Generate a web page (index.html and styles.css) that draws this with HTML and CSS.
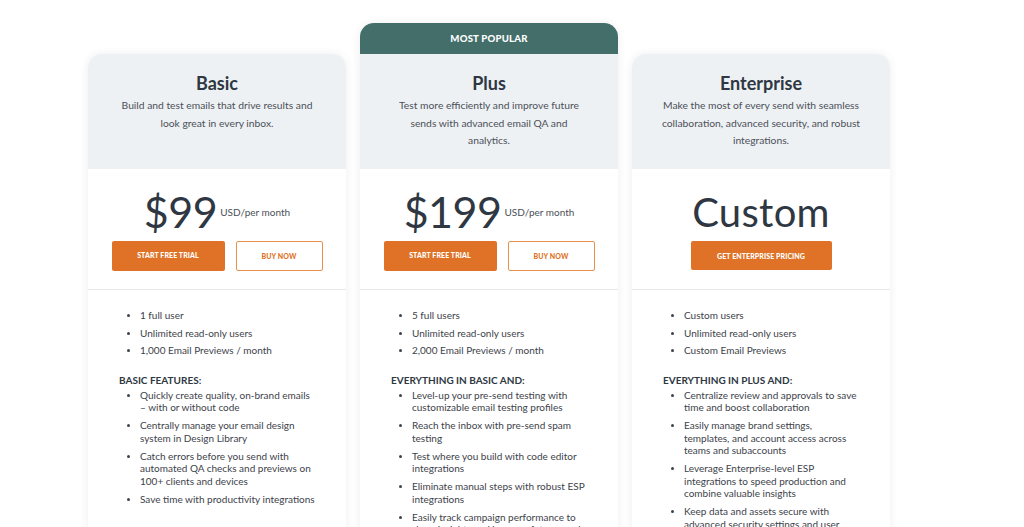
FILE: index.html
```html
<!DOCTYPE html>
<html lang="en">
<head>
<meta charset="utf-8">
<title>Pricing</title>
<link rel="stylesheet" href="styles.css">
</head>
<body>
<main class="plans">
  <section class="card card--offset">
    <header class="card-head">
      <h2 class="card-title">Basic</h2>
      <p class="card-desc">Build and test emails that drive results and look great in every inbox.</p>
    </header>
    <div class="card-price">
      <div class="price"><span class="amount">$99</span><span class="unit">USD/per month</span></div>
      <div class="actions">
        <a class="btn btn-solid btn-trial">START FREE TRIAL</a>
        <a class="btn btn-outline">BUY NOW</a>
      </div>
    </div>
    <div class="card-body">
      <ul class="list">
        <li>1 full user</li>
        <li>Unlimited read-only users</li>
        <li>1,000 Email Previews / month</li>
      </ul>
      <h3 class="list-title">BASIC FEATURES:</h3>
      <ul class="list list--tight">
        <li>Quickly create quality, on-brand emails – with or without code</li>
        <li>Centrally manage your email design system in Design Library</li>
        <li>Catch errors before you send with automated QA checks and previews on 100+ clients and devices</li>
        <li>Save time with productivity integrations</li>
      </ul>
    </div>
  </section>

  <section class="card">
    <div class="badge">MOST POPULAR</div>
    <header class="card-head">
      <h2 class="card-title">Plus</h2>
      <p class="card-desc">Test more efficiently and improve future sends with advanced email QA and analytics.</p>
    </header>
    <div class="card-price">
      <div class="price"><span class="amount">$199</span><span class="unit">USD/per month</span></div>
      <div class="actions">
        <a class="btn btn-solid btn-trial">START FREE TRIAL</a>
        <a class="btn btn-outline">BUY NOW</a>
      </div>
    </div>
    <div class="card-body">
      <ul class="list">
        <li>5 full users</li>
        <li>Unlimited read-only users</li>
        <li>2,000 Email Previews / month</li>
      </ul>
      <h3 class="list-title">EVERYTHING IN BASIC AND:</h3>
      <ul class="list list--tight">
        <li>Level-up your pre-send testing with customizable email testing profiles</li>
        <li>Reach the inbox with pre-send spam testing</li>
        <li>Test where you build with code editor integrations</li>
        <li>Eliminate manual steps with robust ESP integrations</li>
        <li>Easily track campaign performance to show insights and improve future sends</li>
      </ul>
    </div>
  </section>

  <section class="card card--offset">
    <header class="card-head">
      <h2 class="card-title">Enterprise</h2>
      <p class="card-desc">Make the most of every send with seamless collaboration, advanced security, and robust integrations.</p>
    </header>
    <div class="card-price">
      <div class="price"><span class="amount amount--custom">Custom</span></div>
      <div class="actions">
        <a class="btn btn-solid btn-enterprise">GET ENTERPRISE PRICING</a>
      </div>
    </div>
    <div class="card-body">
      <ul class="list">
        <li>Custom users</li>
        <li>Unlimited read-only users</li>
        <li>Custom Email Previews</li>
      </ul>
      <h3 class="list-title">EVERYTHING IN PLUS AND:</h3>
      <ul class="list list--tight">
        <li>Centralize review and approvals to save time and boost collaboration</li>
        <li>Easily manage brand settings, templates, and account access across teams and subaccounts</li>
        <li>Leverage Enterprise-level ESP integrations to speed production and combine valuable insights</li>
        <li>Keep data and assets secure with advanced security settings and user permissions</li>
      </ul>
    </div>
  </section>
</main>
</body>
</html>
```

FILE: styles.css
```css
* { box-sizing: border-box; }

html, body {
  margin: 0;
  padding: 0;
  background: #ffffff;
}

body {
  font-family: "Lato", "Liberation Sans", sans-serif;
  color: #2e3742;
  overflow: hidden;
  height: 527px;
}

.plans {
  display: flex;
  align-items: flex-start;
  gap: 14px;
  padding: 23px 0 0 88px;
}

.card {
  width: 258px;
  flex: 0 0 258px;
  background: #ffffff;
  border-radius: 14px 14px 0 0;
  box-shadow: 0 0 10px rgba(0, 0, 0, 0.07);
  overflow: hidden;
  display: flex;
  flex-direction: column;
}

.card--offset {
  margin-top: 31px;
}

.badge {
  height: 31px;
  background: #436e69;
  color: #ffffff;
  font-size: 9.6px;
  font-weight: 900;
  display: flex;
  align-items: center;
  justify-content: center;
  letter-spacing: 0.2px;
  padding-bottom: 1px;
}

.card-head {
  height: 115px;
  background: #eef1f4;
  text-align: center;
  padding: 18px 29.5px 0;
}

.card-title {
  margin: 0;
  font-size: 18px;
  font-weight: 700;
  line-height: 22px;
  color: #2e3742;
}

.card-desc {
  margin: 3px 0 0;
  font-size: 10.3px;
  line-height: 17.5px;
  color: #4b5058;
}

.card-price {
  height: 121px;
  border-bottom: 1px solid #e6e8ea;
  display: flex;
  flex-direction: column;
  align-items: center;
  padding-top: 20px;
}

.price {
  display: flex;
  align-items: flex-start;
  justify-content: center;
  height: 52px;
}

.amount {
  font-size: 43px;
  line-height: 46px;
  font-weight: 400;
  color: #2e3742;
  letter-spacing: -0.5px;
}

.amount--custom {
  font-size: 40px;
  letter-spacing: 0.3px;
}

.unit {
  font-size: 10px;
  color: #4b5058;
  margin-top: 17px;
  margin-left: 3px;
}

.actions {
  display: flex;
  gap: 11px;
  justify-content: center;
}

.btn {
  height: 30px;
  display: flex;
  align-items: center;
  justify-content: center;
  font-size: 7px;
  font-weight: 900;
  border-radius: 2px;
  letter-spacing: 0.1px;
}

.btn-solid {
  background: #df7226;
  color: #ffffff;
}

.btn-trial {
  width: 113px;
  padding-bottom: 2px;
}

.btn-enterprise {
  width: 141px;
  height: 29px;
}

.btn-outline {
  width: 87px;
  border: 1.5px solid #e8914f;
  color: #df7226;
  background: #ffffff;
}

.card-body {
  padding: 19px 31px 40px 31px;
}

.list {
  margin: 0;
  padding: 0 0 0 21px;
  font-size: 10px;
  line-height: 12.5px;
  color: #3d424a;
}

.list li {
  margin-bottom: 5px;
}

.list li::marker {
  font-size: 9px;
}

.list-title {
  margin: 17px 0 3px;
  font-size: 10px;
  line-height: 12px;
  font-weight: 700;
  color: #2e3742;
}

.list--tight li {
  margin-bottom: 5.5px;
}
```
